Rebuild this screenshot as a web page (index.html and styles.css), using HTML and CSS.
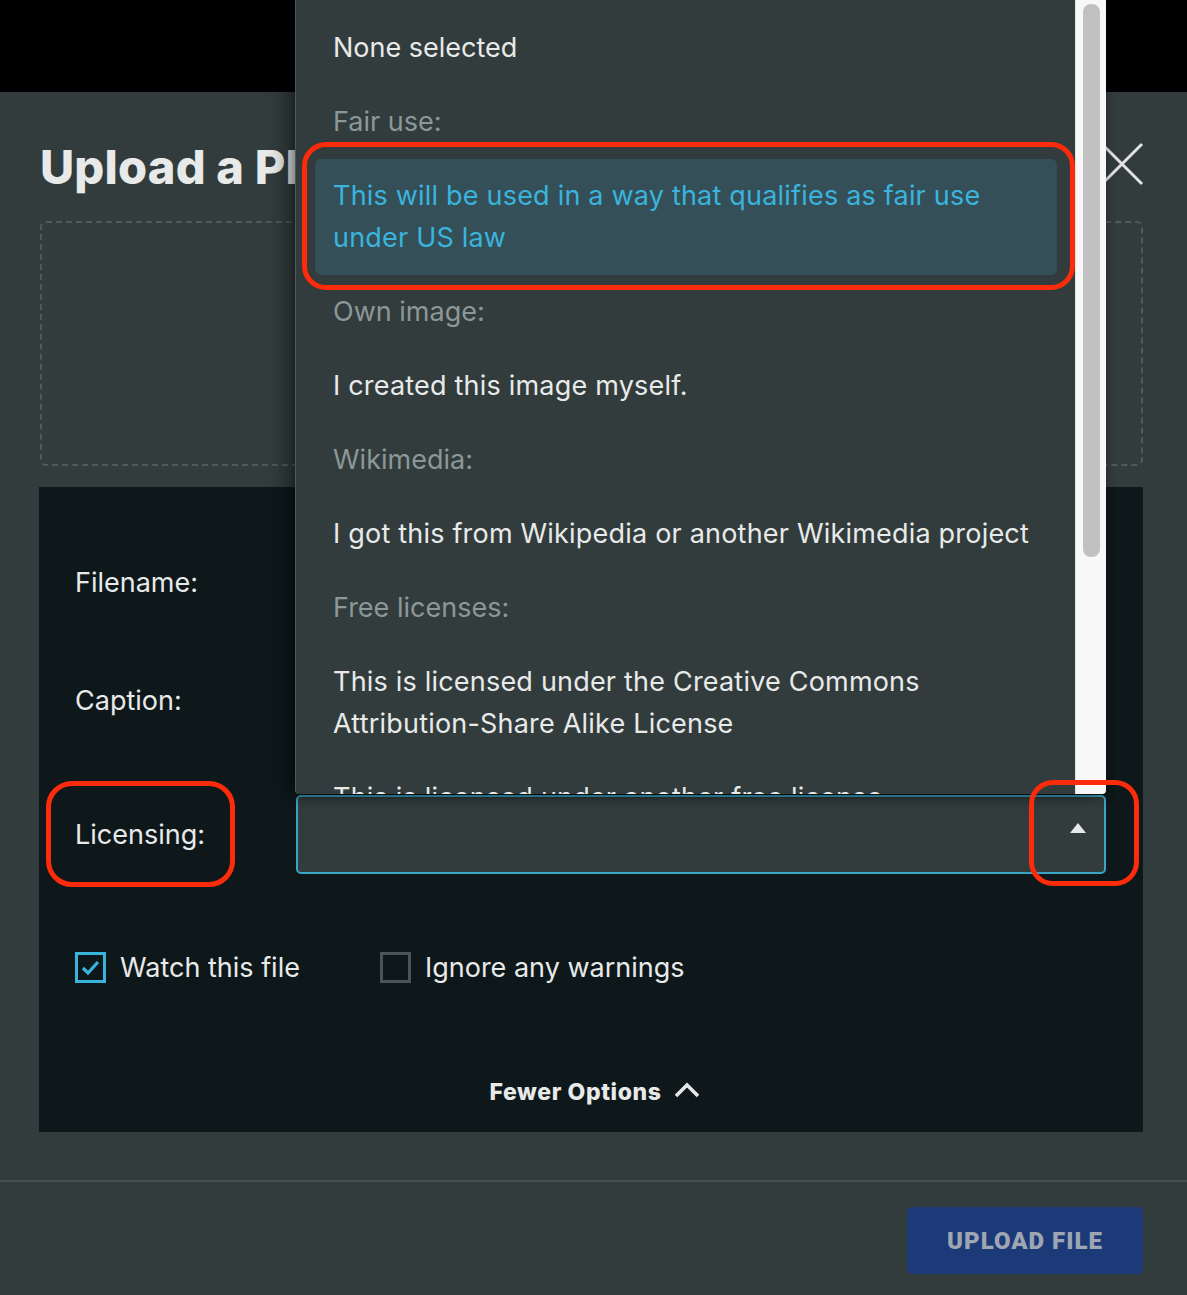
FILE: index.html
```html
<!DOCTYPE html>
<html lang="en">
<head>
<meta charset="utf-8">
<title>Upload a Photo</title>
<link rel="stylesheet" href="styles.css">
</head>
<body>
<div class="topbar"></div>
<div class="modal">
  <div class="modal-head">
    <h1 class="title">Upload a Photo</h1>
    <button class="close" aria-label="Close">
      <svg width="44" height="44" viewBox="0 0 44 44"><path d="M2 2 L42 42 M42 2 L2 42" stroke="#dfe2e2" stroke-width="3" fill="none"/></svg>
    </button>
  </div>
  <div class="dropzone"></div>
  <div class="panel">
    <div class="row row-filename">
      <label class="label">Filename:</label>
      <div class="input"></div>
    </div>
    <div class="row row-caption">
      <label class="label">Caption:</label>
      <div class="input"></div>
    </div>
    <div class="row row-licensing">
      <label class="label">Licensing:</label>
      <div class="select-wrap">
        <div class="menu">
          <div class="menu-list">
            <div class="opt first">None selected</div>
            <div class="grp">Fair use:</div>
            <div class="opt active">This will be used in a way that qualifies as fair use under US law</div>
            <div class="grp">Own image:</div>
            <div class="opt">I created this image myself.</div>
            <div class="grp">Wikimedia:</div>
            <div class="opt">I got this from Wikipedia or another Wikimedia project</div>
            <div class="grp">Free licenses:</div>
            <div class="opt">This is licensed under the Creative Commons Attribution-Share Alike License</div>
            <div class="opt">This is licensed under another free license</div>
          </div>
          <div class="menu-track"><div class="menu-thumb"></div></div>
        </div>
        <div class="select">
          <span class="caret"></span>
        </div>
      </div>
    </div>
    <div class="checks">
      <label class="check"><span class="box on"><svg width="19" height="16" viewBox="0 0 19 16"><path d="M2 8 L7 13 L17 2" stroke="#3ab4dc" stroke-width="3.2" fill="none"/></svg></span>Watch this file</label>
      <label class="check"><span class="box"></span>Ignore any warnings</label>
    </div>
    <div class="fewer">Fewer Options
      <svg width="26" height="16" viewBox="0 0 26 16"><path d="M2 14 L13 3 L24 14" stroke="#e6e8e8" stroke-width="3.6" fill="none"/></svg>
    </div>
  </div>
  <div class="divider"></div>
  <div class="footer">
    <button class="upload">UPLOAD FILE</button>
  </div>
</div>
<div class="mark mark-option"></div>
<div class="mark mark-label"></div>
<div class="mark mark-caret"></div>
</body>
</html>
```

FILE: styles.css
```css
* { box-sizing: border-box; }
html, body { margin: 0; padding: 0; }
body {
  background: #323c3c;
  font-family: "Inter", "Noto Sans", sans-serif;
  color: #e6e8e8;
  width: 1187px;
  height: 1295px;
  overflow: hidden;
  position: relative;
}
.topbar { height: 92px; background: #000; }
.modal { padding: 0 44px 0 39px; }
.modal-head {
  display: flex;
  justify-content: space-between;
  align-items: flex-start;
  height: 129px;
  padding-left: 1px;
}
.title {
  margin: 49px 0 0 0;
  font-family: "Inter", sans-serif;
  font-weight: 800;
  font-size: 47px;
  line-height: 52px;
  letter-spacing: 0.2px;
  color: #e8e9e9;
}
.close {
  margin-top: 50px;
  margin-right: -1px;
  padding: 0;
  background: none;
  border: 0;
  width: 44px;
  height: 44px;
}
.close svg { display: block; }
.dropzone {
  margin-left: 1px;
  height: 245px;
  border: 2px dashed #505a5a;
  border-radius: 6px;
}
.panel {
  margin-top: 21px;
  height: 645px;
  background: #0e181a;
  padding: 56px 37px 0 36px;
}
.row { display: flex; align-items: center; }
.label {
  width: 221px;
  flex: none;
  font-size: 27px;
  color: #e8eaea;
}
.input {
  flex: 1;
  height: 78px;
  border: 2px solid #4a5555;
  border-radius: 4px;
  background: #323c3c;
}
.row-caption { margin-top: 40px; }
.row-licensing { margin-top: 56px; }
.select-wrap { flex: 1; position: relative; }
.select {
  height: 79px;
  border: 2px solid #3aa4c6;
  border-radius: 5px;
  background: #323c3c;
  display: flex;
  align-items: center;
  justify-content: flex-end;
  padding: 0 18px 14px 0;
}
.caret {
  width: 0; height: 0;
  border-left: 8px solid transparent;
  border-right: 8px solid transparent;
  border-bottom: 10px solid #e6e8e8;
}
.menu {
  position: absolute;
  left: -1px;
  right: 0;
  bottom: calc(100% + 1px);
  height: 794px;
  background: #323c3c;
  border-left: 1px solid #4d5858;
  border-radius: 0 0 4px 4px;
  box-shadow: -10px 0 18px rgba(0,0,0,0.35), 0 4px 8px rgba(0,0,0,0.3);
  display: flex;
  overflow: hidden;
  z-index: 5;
}
.menu-list {
  flex: 1;
  padding: 11px 18px 0 19px;
  overflow: hidden;
}
.opt, .grp {
  padding: 16px 18px;
  line-height: 42px;
}
.opt {
  font-family: "Inter", sans-serif;
  font-size: 27px;
  letter-spacing: 0.2px;
  color: #e8eaea;
}
.opt.first, .grp { font-size: 27px; letter-spacing: 0; }
.grp { color: #8c9797; }
.opt.active {
  background: #344f57;
  color: #3bb4dd;
  border-radius: 6px;
}
.menu-track {
  width: 31px;
  flex: none;
  background: #f8f8f8;
  border-left: 1px solid #e2e2e2;
  padding: 4px 6px 0 7px;
}
.menu-thumb {
  height: 553px;
  background: #c1c1c1;
  border-radius: 8px;
}
.checks {
  display: flex;
  gap: 80px;
  margin-top: 77px;
}
.check {
  display: flex;
  align-items: center;
  font-family: "Inter", sans-serif;
  font-size: 27px;
  color: #e8eaea;
  gap: 14px;
}
.box {
  width: 31px; height: 31px;
  border: 3px solid #4a5555;
  display: flex;
  align-items: center;
  justify-content: center;
}
.box.on { border-color: #3ab4dc; }
.fewer {
  margin-top: 94px;
  display: flex;
  justify-content: center;
  align-items: center;
  gap: 12px;
  font-family: "Inter", sans-serif;
  font-weight: 800;
  font-size: 23px;
  letter-spacing: 0.6px;
  color: #e8eaea;
  padding-left: 8px;
}
.fewer svg { margin-top: -4px; }
.divider {
  margin: 48px -44px 0 -39px;
  height: 2px;
  background: #46504f;
}
.footer {
  display: flex;
  justify-content: flex-end;
  padding-top: 25px;
}
.upload {
  width: 236px;
  height: 67px;
  background: #1d3a78;
  border: 0;
  border-radius: 5px;
  color: #9ea6b3;
  font-family: "Roboto", sans-serif;
  font-weight: 900;
  font-size: 24px;
  letter-spacing: 1px;
}
.mark {
  position: absolute;
  border: 5px solid #fb2b0b;
  z-index: 10;
}
.mark-option { left: 302px; top: 142px; width: 773px; height: 148px; border-radius: 24px; }
.mark-label { left: 46px; top: 781px; width: 189px; height: 106px; border-radius: 26px; }
.mark-caret { left: 1029px; top: 780px; width: 110px; height: 106px; border-radius: 24px; }
```
